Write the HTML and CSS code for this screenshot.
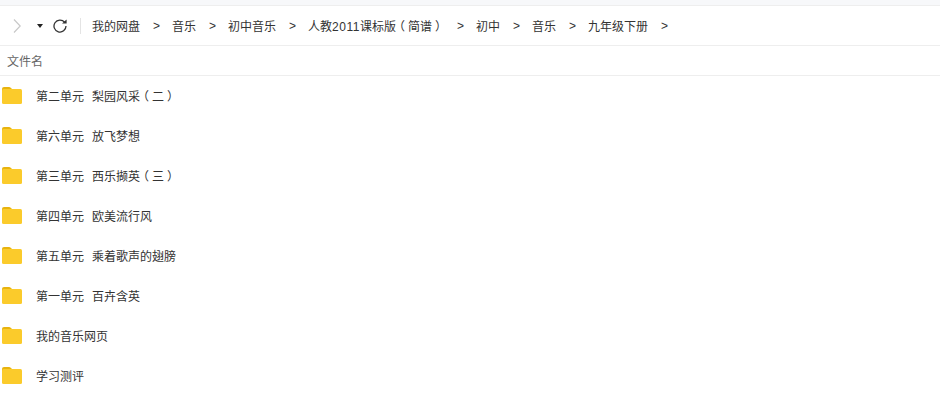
FILE: index.html
```html
<!DOCTYPE html>
<html lang="zh-CN">
<head>
    <title>我的网盘</title>
    <link rel="stylesheet" href="styles.css">
</head>
<body>
    <div class="top-strip"></div>

    <div class="toolbar">
        <svg class="icon-forward" width="8" height="16" viewBox="0 0 8 16">
            <path d="M1 1.5l6.2 6.5L1 14.5" fill="none" stroke="#c8c8c8" stroke-width="1.2"/>
        </svg>
        <svg class="icon-caret" width="6" height="4" viewBox="0 0 6 4">
            <path d="M0 0h6L3 4z" fill="#222"/>
        </svg>
        <svg class="icon-refresh" width="14" height="14" viewBox="0 0 14 14">
            <path d="M11.6 3.2A6 6 0 1 0 13 7" fill="none" stroke="#333" stroke-width="1.3"/>
            <path d="M9 4.6h4.6V0.4z" fill="#333"/>
        </svg>
        <div class="divider"></div>
        <div class="crumbs">
            <a class="crumb">我的网盘</a>
            <span class="sep">&gt;</span>
            <a class="crumb">音乐</a>
            <span class="sep">&gt;</span>
            <a class="crumb">初中音乐</a>
            <span class="sep">&gt;</span>
            <a class="crumb">人教<span class="num">2011</span>课标版<span class="paren">（</span>简谱<span class="paren">）</span></a>
            <span class="sep">&gt;</span>
            <a class="crumb">初中</a>
            <span class="sep">&gt;</span>
            <a class="crumb">音乐</a>
            <span class="sep">&gt;</span>
            <a class="crumb">九年级下册</a>
            <span class="sep">&gt;</span>
        </div>
    </div>

    <div class="list-header">文件名</div>

    <div class="file-list">
        <div class="file-row">
            <svg class="folder" width="20" height="17" viewBox="0 0 20 17"><path class="folder-tab" d="M0 2q0-2 2-2h5q1 0 2 1l1 1v4H0z"/><rect class="folder-body" y="2" width="20" height="15" rx="1.5"/></svg>
            <span class="file-name">第二单元&nbsp;&nbsp;梨园风采<span class="paren">（</span>二<span class="paren">）</span></span>
        </div>
        <div class="file-row">
            <svg class="folder" width="20" height="17" viewBox="0 0 20 17"><path class="folder-tab" d="M0 2q0-2 2-2h5q1 0 2 1l1 1v4H0z"/><rect class="folder-body" y="2" width="20" height="15" rx="1.5"/></svg>
            <span class="file-name">第六单元&nbsp;&nbsp;放飞梦想</span>
        </div>
        <div class="file-row">
            <svg class="folder" width="20" height="17" viewBox="0 0 20 17"><path class="folder-tab" d="M0 2q0-2 2-2h5q1 0 2 1l1 1v4H0z"/><rect class="folder-body" y="2" width="20" height="15" rx="1.5"/></svg>
            <span class="file-name">第三单元&nbsp;&nbsp;西乐撷英<span class="paren">（</span>三<span class="paren">）</span></span>
        </div>
        <div class="file-row">
            <svg class="folder" width="20" height="17" viewBox="0 0 20 17"><path class="folder-tab" d="M0 2q0-2 2-2h5q1 0 2 1l1 1v4H0z"/><rect class="folder-body" y="2" width="20" height="15" rx="1.5"/></svg>
            <span class="file-name">第四单元&nbsp;&nbsp;欧美流行风</span>
        </div>
        <div class="file-row">
            <svg class="folder" width="20" height="17" viewBox="0 0 20 17"><path class="folder-tab" d="M0 2q0-2 2-2h5q1 0 2 1l1 1v4H0z"/><rect class="folder-body" y="2" width="20" height="15" rx="1.5"/></svg>
            <span class="file-name">第五单元&nbsp;&nbsp;乘着歌声的翅膀</span>
        </div>
        <div class="file-row">
            <svg class="folder" width="20" height="17" viewBox="0 0 20 17"><path class="folder-tab" d="M0 2q0-2 2-2h5q1 0 2 1l1 1v4H0z"/><rect class="folder-body" y="2" width="20" height="15" rx="1.5"/></svg>
            <span class="file-name">第一单元&nbsp;&nbsp;百卉含英</span>
        </div>
        <div class="file-row">
            <svg class="folder" width="20" height="17" viewBox="0 0 20 17"><path class="folder-tab" d="M0 2q0-2 2-2h5q1 0 2 1l1 1v4H0z"/><rect class="folder-body" y="2" width="20" height="15" rx="1.5"/></svg>
            <span class="file-name">我的音乐网页</span>
        </div>
        <div class="file-row">
            <svg class="folder" width="20" height="17" viewBox="0 0 20 17"><path class="folder-tab" d="M0 2q0-2 2-2h5q1 0 2 1l1 1v4H0z"/><rect class="folder-body" y="2" width="20" height="15" rx="1.5"/></svg>
            <span class="file-name">学习测评</span>
        </div>
    </div>
</body>
</html>
```

FILE: styles.css
```css
:root {
    --text-color: #333;
    --muted-color: #666;
    --line-color: #eee;
}

body {
    margin: 0;
    height: 401px;
    overflow: hidden;
    background-color: #fff;
    color: var(--text-color);
    font-family: "Liberation Sans", "Noto Sans CJK SC", sans-serif;
    font-size: 12px;
    text-spacing-trim: space-all;
}

.top-strip {
    height: 5px;
    background-color: #f7f8fa;
    border-bottom: 1px solid var(--line-color);
}

.toolbar {
    display: flex;
    align-items: center;
    height: 39px;
    border-bottom: 1px solid var(--line-color);
}

.icon-forward {
    margin-left: 13px;
}

.icon-caret {
    margin-left: 16px;
}

.icon-refresh {
    margin-left: 10px;
}

.divider {
    width: 1px;
    height: 16px;
    margin-left: 13px;
    background-color: #e4e4e4;
}

.crumbs {
    display: flex;
    align-items: center;
    margin-left: 11px;
}

.crumb {
    padding-top: 3px;
    line-height: 16px;
}

.num {
    letter-spacing: 0.5px;
}

.sep {
    width: 7px;
    margin: 0 12px 0 13px;
}

.paren {
    padding: 0 3px;
    line-height: 1;
    font-family: "Noto Sans CJK SC", sans-serif;
    font-feature-settings: "halt";
}

.list-header {
    height: 29px;
    padding-left: 7px;
    line-height: 32px;
    color: var(--muted-color);
    border-bottom: 1px solid var(--line-color);
}

.file-row {
    display: flex;
    align-items: center;
    height: 40px;
    padding-left: 2px;
}

.folder {
    flex: none;
    margin-bottom: 1px;
}

.folder-tab {
    fill: #e8b30e;
}

.folder-body {
    fill: #fbcb2b;
}

.file-name {
    margin-top: 2px;
    margin-left: 14px;
    line-height: 16px;
    word-spacing: 0.67px;
}
```
